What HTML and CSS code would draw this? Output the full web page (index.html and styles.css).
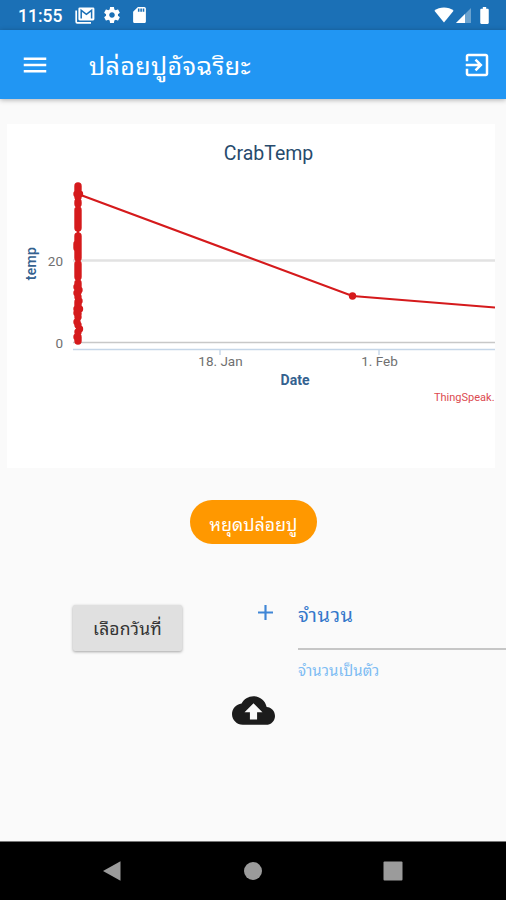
FILE: index.html
```html
<!DOCTYPE html>
<html lang="th">
<head>
    <meta charset="UTF-8">
    <meta name="viewport" content="width=device-width, initial-scale=1.0">
    <title>ปล่อยปูอัจฉริยะ</title>
    <link rel="stylesheet" href="styles.css">
</head>
<body>
    <div class="status-bar">
        <span class="clock">11:55</span>
        <svg class="status-mail" viewBox="0 0 20 17">
            <path d="M1.2 3.5v11.3q0 1 1 1H16" fill="none" stroke="#fff" stroke-width="1.7"/>
            <rect x="3.4" y="0.4" width="16" height="13" rx="1.3" fill="#fff"/>
            <path d="M6.2 11.5V3.3l5.2 4 5.2-4v8.2" fill="none" stroke="#1b70b6" stroke-width="1.5"/>
        </svg>
        <svg class="status-gear" viewBox="2 2 20 20">
            <path fill="#fff" d="M19.43 12.98c.04-.32.07-.64.07-.98s-.03-.66-.07-.98l2.11-1.65c.19-.15.24-.42.12-.64l-2-3.46c-.12-.22-.39-.3-.61-.22l-2.49 1c-.52-.4-1.08-.73-1.69-.98l-.38-2.65C14.46 2.18 14.25 2 14 2h-4c-.25 0-.46.18-.49.42l-.38 2.65c-.61.25-1.17.59-1.69.98l-2.49-1c-.23-.09-.49 0-.61.22l-2 3.46c-.13.22-.07.49.12.64l2.11 1.65c-.04.32-.07.65-.07.98s.03.66.07.98l-2.11 1.65c-.19.15-.24.42-.12.64l2 3.46c.12.22.39.3.61.22l2.49-1c.52.4 1.08.73 1.69.98l.38 2.65c.03.24.24.42.49.42h4c.25 0 .46-.18.49-.42l.38-2.65c.61-.25 1.17-.59 1.69-.98l2.49 1c.23.09.49 0 .61-.22l2-3.46c.12-.22.07-.49-.12-.64l-2.11-1.65zM12 15.5c-1.93 0-3.5-1.57-3.5-3.5s1.57-3.5 3.5-3.5 3.5 1.57 3.5 3.5-1.57 3.5-3.5 3.5z"/>
        </svg>
        <svg class="status-sd" viewBox="4 2 16 20">
            <path fill="#fff" d="M18 2h-8L4.02 8 4 20c0 1.1.9 2 2 2h12c1.1 0 2-.9 2-2V4c0-1.1-.9-2-2-2zm-6 6h-2V4h2v4zm3 0h-2V4h2v4zm3 0h-2V4h2v4z"/>
        </svg>
        <div class="status-right">
            <svg class="status-wifi" viewBox="0 0 20 16">
                <path fill="#fff" d="M10 15.5.4 3.7C3 1.7 6.3.5 10 .5s7 1.2 9.6 3.2z"/>
            </svg>
            <svg class="status-signal" viewBox="0 0 15 15">
                <path fill="#fff" opacity=".35" d="M0 15 15 0v15z"/>
                <path fill="#fff" d="M0 15 9 6v9z"/>
            </svg>
            <svg class="status-battery" viewBox="7 2 10 20">
                <path fill="#fff" d="M15.67 4H14V2h-4v2H8.33C7.6 4 7 4.6 7 5.33v15.33C7 21.4 7.6 22 8.33 22h7.33c.74 0 1.34-.6 1.34-1.33V5.33C17 4.6 16.4 4 15.67 4z"/>
            </svg>
        </div>
    </div>

    <header class="app-bar">
        <svg class="menu-icon" viewBox="0 0 24 24">
            <path fill="#fff" d="M3 18h18v-2H3v2zm0-5h18v-2H3v2zm0-7v2h18V6H3z"/>
        </svg>
        <h1 class="app-title">ปล่อยปูอัจฉริยะ</h1>
        <svg class="exit-icon" viewBox="0 0 24 24">
            <path fill="#fff" d="M10.09 15.59 11.5 17l5-5-5-5-1.41 1.41L12.67 11H3v2h9.67l-2.58 2.59zM19 3H5c-1.11 0-2 .9-2 2v4h2V5h14v14H5v-4H3v4c0 1.1.89 2 2 2h14c1.1 0 2-.9 2-2V5c0-1.1-.9-2-2-2z"/>
        </svg>
    </header>

    <main class="content">
        <svg class="chart" viewBox="0 0 488 344">
            <path d="M66 136.5H488" stroke="#e2e2e2" stroke-width="2.4"/>
            <path d="M66 218.5H488" stroke="#c8c8c8" stroke-width="1.4"/>
            <path d="M66 225.5H488M213 225v6M372 225v6" fill="none" stroke="#c5d6e8" stroke-width="1.4"/>
            <path class="series" d="M71 62V217M71 70 345.5 172 488 183.5"/>
            <path class="points" d="M71 62V73M70 70v0M72.5 70v0M71 78v2M71 86V104M71 112V134M70 120V124M71 140V153M71 159V168M70 163v0M72 166v0M70 169v0M71 173v0M72 177v0M71 178V190M70 185v0M72.5 185v0M70 189v0M71 193v0M70 198v0M71 201v0M72.5 205v0M71 208v0M70 213v0M71 213V217M345.5 172v0"/>
            <text class="chart-title" x="261.5" y="36">CrabTemp</text>
            <text class="tick end" x="56" y="142">20</text>
            <text class="tick end" x="56" y="224">0</text>
            <text class="tick" x="213.5" y="242">18. Jan</text>
            <text class="tick" x="372.5" y="242">1. Feb</text>
            <text class="axis-title" x="288" y="261">Date</text>
            <text class="axis-title temp" transform="translate(29 139.5) rotate(-90)">temp</text>
            <text class="credits" x="427" y="277">ThingSpeak.</text>
        </svg>

        <button class="stop-button">หยุดปล่อยปู</button>

        <div class="form-row">
            <button class="date-button">เลือกวันที่</button>
            <svg class="plus-icon" viewBox="5 5 14 14">
                <path fill="#3f86d6" d="M19 13h-6v6h-2v-6H5v-2h6V5h2v6h6v2z"/>
            </svg>
            <div class="amount">
                <div class="amount-label">จำนวน</div>
                <div class="amount-help">จำนวนเป็นตัว</div>
            </div>
        </div>

        <svg class="upload-icon" viewBox="0 4 24 16">
            <path fill="#1c1c1c" d="M19.35 10.04C18.67 6.59 15.64 4 12 4 9.11 4 6.6 5.64 5.35 8.04 2.34 8.36 0 10.91 0 14c0 3.31 2.69 6 6 6h13c2.76 0 5-2.24 5-5 0-2.64-2.05-4.78-4.65-4.96zM14 13v4h-4v-4H7l5-5 5 5h-3z"/>
        </svg>
    </main>

    <nav class="nav-bar">
        <svg class="nav-icon" viewBox="0 0 20 20"><path d="M1 10 18.5.2v19.6z"/></svg>
        <svg class="nav-icon" viewBox="0 0 20 20"><circle cx="10" cy="10" r="9"/></svg>
        <svg class="nav-icon" viewBox="0 0 20 20"><rect x=".5" y=".5" width="19" height="19" rx="1"/></svg>
    </nav>
</body>
</html>
```
FILE: styles.css
```css
body {
    margin: 0;
    width: 506px;
    height: 900px;
    display: flex;
    flex-direction: column;
    overflow: hidden;
    background-color: #fafafa;
    font-family: Roboto, "Noto Sans Thai Looped", "Noto Looped Thai", Loma, Waree, Garuda, "Noto Sans Thai", sans-serif;
}

svg {
    display: block;
    flex-shrink: 0;
}

button {
    border: none;
    padding: 0;
    font-family: inherit;
}

.status-bar {
    display: flex;
    align-items: center;
    height: 30px;
    padding: 0 16px 0 18px;
    box-sizing: border-box;
    background-color: #1b70b6;
    color: white;
}

.clock {
    width: 57px;
    font-size: 17.5px;
    font-weight: 500;
    line-height: 30px;
    padding-top: 2px;
}

.status-mail {
    width: 20px;
    height: 17px;
    margin-right: 9px;
}

.status-gear {
    width: 16px;
    height: 16px;
    margin-right: 13px;
}

.status-sd {
    width: 13px;
    height: 16px;
}

.status-right {
    display: flex;
    align-items: center;
    margin-left: auto;
}

.status-wifi {
    width: 20px;
    height: 16px;
    margin-right: 2px;
}

.status-signal {
    width: 15px;
    height: 15px;
    margin-right: 8px;
}

.status-battery {
    width: 11px;
    height: 17px;
}

.app-bar {
    display: flex;
    align-items: center;
    height: 69px;
    padding: 0 14px 0 20px;
    background-color: #2196f3;
    box-shadow: 0 1px 5px rgba(0, 0, 0, 0.3);
    color: white;
}

.menu-icon,
.exit-icon {
    width: 30px;
    height: 30px;
}

.app-title {
    flex: 1;
    margin: 4px 0 0 39px;
    font-size: 25px;
    font-weight: 400;
    line-height: 40px;
    letter-spacing: 0.4px;
}

.content {
    flex: 1;
    display: flex;
    flex-direction: column;
    padding-top: 25px;
}

.chart {
    width: 488px;
    height: 344px;
    margin-left: 7px;
    background-color: white;
    overflow: hidden;
}

.series {
    fill: none;
    stroke: #d51a1c;
    stroke-width: 2.2;
}

.points {
    fill: none;
    stroke: #d51a1c;
    stroke-width: 7.4;
    stroke-linecap: round;
}

.chart-title {
    font-size: 19.5px;
    fill: #274b6d;
    text-anchor: middle;
}

.tick {
    font-size: 13.5px;
    fill: #707070;
    text-anchor: middle;
}

.end {
    text-anchor: end;
}

.axis-title {
    font-size: 14px;
    font-weight: 700;
    fill: #34618f;
    text-anchor: middle;
}

.temp {
    font-weight: 500;
    letter-spacing: 0.3px;
}

.credits {
    font-size: 11px;
    fill: #dc4a50;
}

.stop-button {
    width: 127px;
    height: 44px;
    margin: 32px 0 0 190px;
    padding-top: 2px;
    border-radius: 22px;
    background-color: #ff9800;
    color: white;
    font-size: 17.5px;
    letter-spacing: 0.1px;
}

.form-row {
    display: flex;
    align-items: flex-start;
    height: 91px;
    margin-top: 61px;
    padding-left: 73px;
}

.date-button {
    width: 109px;
    height: 46px;
    padding-bottom: 2px;
    border-radius: 2px;
    background-color: #e0e0e0;
    box-shadow: 0 1px 3px rgba(0, 0, 0, 0.35);
    color: #333;
    font-size: 17.5px;
    letter-spacing: 0.2px;
}

.plus-icon {
    width: 15px;
    height: 15px;
    margin: 0 0 0 76px;
}

.amount {
    flex: 1;
    margin-left: 25px;
}

.amount-label {
    height: 43px;
    border-bottom: 2px solid #c6c6c6;
    color: #3478cb;
    font-size: 20px;
    line-height: 20px;
    letter-spacing: 0.5px;
}

.amount-help {
    margin-top: 10px;
    color: #7dbcf3;
    font-size: 15px;
    line-height: 22px;
    letter-spacing: 0.1px;
}

.upload-icon {
    width: 43px;
    height: 29px;
    margin-left: 232px;
}

.nav-bar {
    display: flex;
    align-items: center;
    justify-content: space-between;
    height: 58px;
    padding: 0 103px 0 102px;
    border-top: 1px solid #777;
    background-color: black;
}

.nav-icon {
    width: 20px;
    height: 20px;
    fill: #9b9b9b;
}
```
